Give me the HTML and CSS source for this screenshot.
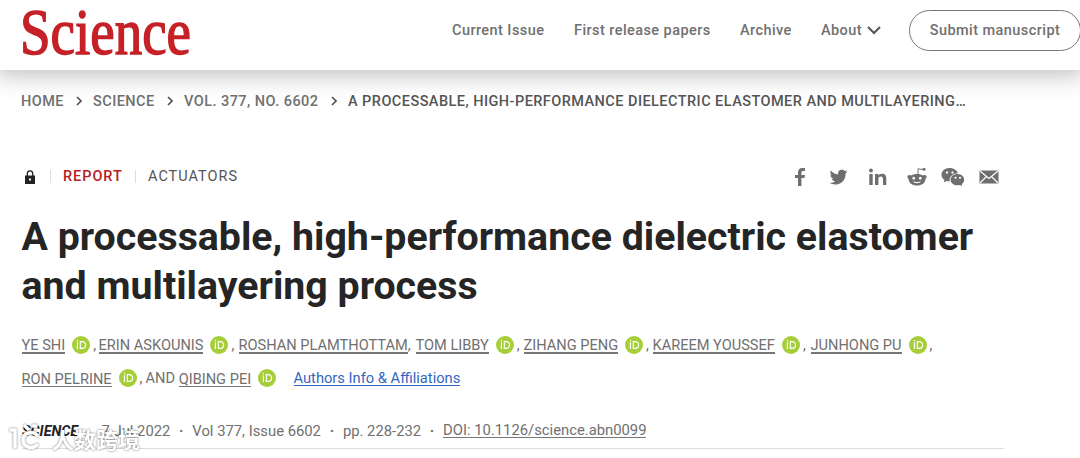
FILE: index.html
```html
<!DOCTYPE html>
<html lang="en">
<head>
<meta charset="utf-8">
<title>A processable, high-performance dielectric elastomer and multilayering process | Science</title>
<link rel="stylesheet" href="styles.css">
</head>
<body>
<svg class="defs" width="0" height="0" aria-hidden="true">
  <symbol id="orcid" viewBox="0 0 18 18"><circle cx="9" cy="9" r="9" fill="#a6ce39"/><path d="M5.400 6.300v6.600M8.300 5.600v6.700h1.900c2.100 0 3.400-1.400 3.400-3.350S12.300 5.600 10.200 5.600z" fill="none" stroke="#fff" stroke-width="1.150"/><circle cx="5.400" cy="4.500" r=".8" fill="#fff"/></symbol>
  <symbol id="chev" viewBox="0 0 6 10"><path d="M1 1l4 4-4 4" fill="none" stroke="#555" stroke-width="1.700"/></symbol>
</svg>
<header class="header">
  <svg class="logo" width="180" height="70" viewBox="0 0 180 70" role="img"><text x="-1" y="54" textLength="171" lengthAdjust="spacingAndGlyphs">Science</text></svg>
  <nav class="nav">
    <a class="n1">Current Issue</a><a class="n2">First release papers</a><a class="n3">Archive</a><a class="n4">About <svg width="14" height="9" viewBox="0 0 14 9"><path d="M1 1l6 6 6-6" fill="none" stroke="#555" stroke-width="2"/></svg></a>
    <a class="submit">Submit manuscript</a>
  </nav>
</header>
<main class="main">
  <div class="crumbs"><a class="c1">HOME</a><svg><use href="#chev"/></svg><a class="c2">SCIENCE</a><svg><use href="#chev"/></svg><a class="c3">VOL. 377, NO. 6602</a><svg><use href="#chev"/></svg><span class="current">A PROCESSABLE, HIGH-PERFORMANCE DIELECTRIC ELASTOMER AND MULTILAYERING…</span></div>
  <div class="meta">
    <svg class="lock" width="10" height="14" viewBox="0 0 10 14"><path d="M2.300 6V3.600a2.700 2.700 0 0 1 5.400 0V6" fill="none" stroke="#222" stroke-width="1.300"/><path fill="#222" fill-rule="evenodd" d="M0 5.500h10V14H0zM4 8.500v2h2v-2z"/></svg>
    <span class="report">REPORT</span><span class="topic">ACTUATORS</span>
    <div class="share">
      <svg viewBox="0 0 20 20"><path d="M8 19v-8H5V8h3V5.600C8 2.700 9.500 1 12.200 1H15v3h-2c-1.200 0-1.600.6-1.600 1.700V8H15l-.5 3h-3.100v8z"/></svg>
      <svg viewBox="0 0 20 20"><path d="M18.500 4.600c-.6.300-1.300.5-2 .6.700-.5 1.300-1.200 1.600-2-.7.400-1.500.7-2.300.9A3.700 3.700 0 0 0 9.300 7.500C6.200 7.300 3.500 5.900 1.900 3.600.9 5.200 1.400 7.300 3 8.400c-.6 0-1.100-.2-1.600-.4 0 1.700 1.200 3.200 2.900 3.600-.5.200-1.100.2-1.600.1.500 1.400 1.800 2.500 3.400 2.500-1.700 1.300-3.500 1.800-5.600 1.600 7.200 4.400 16.300-.4 16.100-9.200.8-.5 1.400-1.200 1.900-2z"/></svg>
      <svg viewBox="0 0 20 20"><circle cx="3" cy="3.500" r="1.900"/><path d="M1.300 7h3.400v11H1.300zM7 7h3.300v1.500C11 7.400 12.200 6.700 14 6.700c3.500 0 4.300 2.200 4.300 5.300v6H15v-5.500c0-1.500-.3-2.900-2.200-2.900-1.800 0-2.400 1.300-2.400 2.900V18H7z"/></svg>
      <svg viewBox="0 0 20 20"><path fill-rule="evenodd" d="M10 7c2.500 0 4.700.6 6.200 1.600 1-1 3.300-.5 3.400 1.300 0 .8-.5 1.500-1.200 1.800.2 4-3.800 6.800-8.400 6.800s-8.600-2.800-8.400-6.800C.9 11.400.4 10.700.4 9.900.5 8.100 2.800 7.600 3.800 8.600 5.300 7.600 7.500 7 10 7zM6.700 9.800a1.400 1.400 0 1 0 .01 0zM13.300 9.800a1.400 1.400 0 1 0 .01 0zM6 14c1 3 7 3 8 0-2 1.300-6 1.300-8 0z"/><path d="M11 7.500V1.800l5 .7" fill="none" stroke="#6e6e6e"/><circle cx="17" cy="2.200" r="1.500"/></svg>
      <svg class="wechat" viewBox="0 0 24 20"><path fill-rule="evenodd" d="M8.500 1C3.800 1 .5 4 .5 7.800c0 2.200 1.200 4.100 3 5.300L2.700 15.500l3-1.500c1 .3 2 .4 3 .4-.8-4.600 3-8.100 8.100-8.200C16 3.100 12.500 1 8.500 1zM6 4.300a1.200 1.200 0 1 0 .01 0zM11.500 4.300a1.200 1.200 0 1 0 .01 0z"/><path fill-rule="evenodd" d="M16.600 7.100c-3.900 0-7 2.400-7 5.600s3.100 5.600 7 5.600c.8 0 1.600-.1 2.300-.3l2.400 1.300-.6-2.100c4.800-3.300 2.200-10.100-4.100-10.100zM14.500 9.800a1 1 0 1 0 .01 0zM19 9.800a1 1 0 1 0 .01 0z"/></svg>
      <svg viewBox="0 0 20 20"><path d="M.5 3.500h19v13H.5z"/><path d="M1 4l9 7.500L19 4M1 16l6.500-6.500M19 16l-6.500-6.500" fill="none" stroke="#fff" stroke-width="1.200"/></svg>
    </div>
  </div>
  <h1 class="title">A processable, high-performance dielectric elastomer<br>and multilayering process</h1>
  <div class="authors">
    <div class="row r1"><span class="slot a1"><a>YE SHI</a><svg><use href="#orcid"/></svg>,</span><span class="slot a2"><a>ERIN ASKOUNIS</a><svg><use href="#orcid"/></svg>,</span><span class="slot a3"><a>ROSHAN PLAMTHOTTAM</a>,</span><span class="slot a4"><a>TOM LIBBY</a><svg><use href="#orcid"/></svg>,</span><span class="slot a5"><a>ZIHANG PENG</a><svg><use href="#orcid"/></svg>,</span><span class="slot a6"><a>KAREEM YOUSSEF</a><svg><use href="#orcid"/></svg>,</span><span class="slot"><a>JUNHONG PU</a><svg><use href="#orcid"/></svg>,</span></div>
    <div class="row r2"><span class="slot b1"><a>RON PELRINE</a><svg><use href="#orcid"/></svg>,</span><span class="slot b2">AND&nbsp;<a>QIBING PEI</a><svg><use href="#orcid"/></svg></span><a class="info">Authors Info &amp; Affiliations</a></div>
  </div>
  <div class="pub"><b>SCIENCE</b><span class="d1">7 Jul 2022</span><i>·</i><span class="d2">Vol 377, Issue 6602</span><i>·</i><span class="d3">pp. 228-232</span><i>·</i><a class="doi">DOI: 10.1126/science.abn0099</a></div>
</main>
<svg class="watermark" width="140" height="34" viewBox="0 0 140 34"><path d="M5 8h4v17M31 13c-5-5-14-2-14 5s9 10 14 5M19 4l3 3M27 4h3" fill="none" stroke="#fff" stroke-width="3.500" stroke-linecap="round" stroke-linejoin="round"/><text x="46" y="26" textLength="88">人数跨境</text></svg>
</body>
</html>
```
FILE: styles.css
```css
body { margin: 0; width: 1080px; height: 458px; overflow: hidden; background: #fff; color: #707070; font-family: Roboto, "Liberation Sans", sans-serif; font-size: 15px; }
a { color: inherit; text-decoration: none; white-space: nowrap; }
.defs { position: absolute; }
.header { display: flex; align-items: flex-start; height: 70px; position: relative; background: #fff; box-shadow: 0 0 24px 4px rgba(0,0,0,.28); }
.logo { margin-left: 21px; flex: none; overflow: visible; }
.logo text { font-family: "Liberation Serif", serif; font-size: 65px; fill: #c52127; stroke: #c52127; stroke-width: 1.500px; }
.nav { display: flex; align-items: center; margin: 10px 0 0 251px; height: 41px; font-size: 14.500px; font-weight: 500; letter-spacing: .43px; }
.nav a { flex: none; box-sizing: border-box; }
.n1 { width: 122px; }
.n2 { width: 166px; }
.n3 { width: 81px; }
.n4 { width: 88px; }
.n4 svg { margin-left: 1px; }
.nav .submit { width: 172px; height: 41px; line-height: 39px; border: 1px solid #777; border-radius: 21px; text-align: center; }
.main { padding: 0 22px; }
.crumbs { display: flex; align-items: center; height: 20px; margin: 21px 0 0 -1px; font-size: 14.500px; font-weight: 500; letter-spacing: .45px; white-space: nowrap; }
.crumbs svg { flex: none; width: 6px; height: 10px; margin-right: 11px; }
.c1 { flex: none; width: 55px; }
.c2 { flex: none; width: 74px; }
.c3 { flex: none; width: 147px; }
.current { color: #555; }
.meta { display: flex; align-items: center; height: 24px; margin-top: 53px; font-size: 14.500px; }
.lock { margin: 2px 0 0 3px; }
.report { box-sizing: border-box; margin-left: 15px; padding-left: 12px; width: 85px; border-left: 1px solid #ddd; line-height: 13px; font-weight: 500; color: #b5201d; letter-spacing: .95px; }
.topic { padding-left: 12px; border-left: 1px solid #ddd; line-height: 13px; color: #555; letter-spacing: 1px; }
.share { display: flex; gap: 19px; margin: 2px 59px 0 auto; }
.share svg { width: 20px; height: 20px; fill: #6e6e6e; }
.share .wechat { width: 24px; margin: 0 -5px 0 -5px; }
.title { margin: 25px 0 0 -.5px; font-size: 39.300px; line-height: 49px; font-weight: 700; color: #252525; white-space: nowrap; }
.authors { margin: 16px 0 0 -.5px; font-size: 14.600px; }
.row { display: flex; align-items: center; height: 33px; white-space: nowrap; padding-top: 1px; box-sizing: border-box; }
.slot { display: flex; align-items: center; flex: none; line-height: 17px; padding-top: 2px; }
.slot a { border-bottom: 1px solid #777; line-height: 14px; padding-top: 2px; }
.r1 .slot a { border-bottom-width: 2px; line-height: 13px; padding-top: 3px; }
.slot svg { width: 18px; height: 18px; margin: 0 3px 0 7px; }
.a1 { width: 77px; }
.a2 { width: 140px; }
.a3 { width: 177px; }
.a4 { width: 108px; }
.a5 { width: 129px; }
.a6 { width: 158px; }
.b1 { width: 124px; }
.b2 { width: 148px; }
.info { color: #3366c0; border-bottom: 1px solid #3366c0; line-height: 14px; margin-top: 2px; font-size: 14.700px; }
.pub { display: flex; align-items: center; box-sizing: border-box; width: 982px; height: 36px; margin-top: 20px; border-bottom: 1px solid #ddd; font-size: 14.800px; white-space: nowrap; }
.pub b { width: 79.500px; font-weight: 700; font-style: italic; color: #222; font-size: 14.300px; }
.pub i { width: 22px; text-align: center; font-style: normal; font-weight: 700; }
.doi { border-bottom: 1px solid #777; line-height: 14px; }
.watermark { position: absolute; left: 6px; top: 422px; filter: drop-shadow(0 0 1px rgba(0,0,0,.55)); }
.watermark text { font-family: "Noto Sans CJK SC", sans-serif; font-size: 22px; font-weight: 700; fill: #fff; }
```
